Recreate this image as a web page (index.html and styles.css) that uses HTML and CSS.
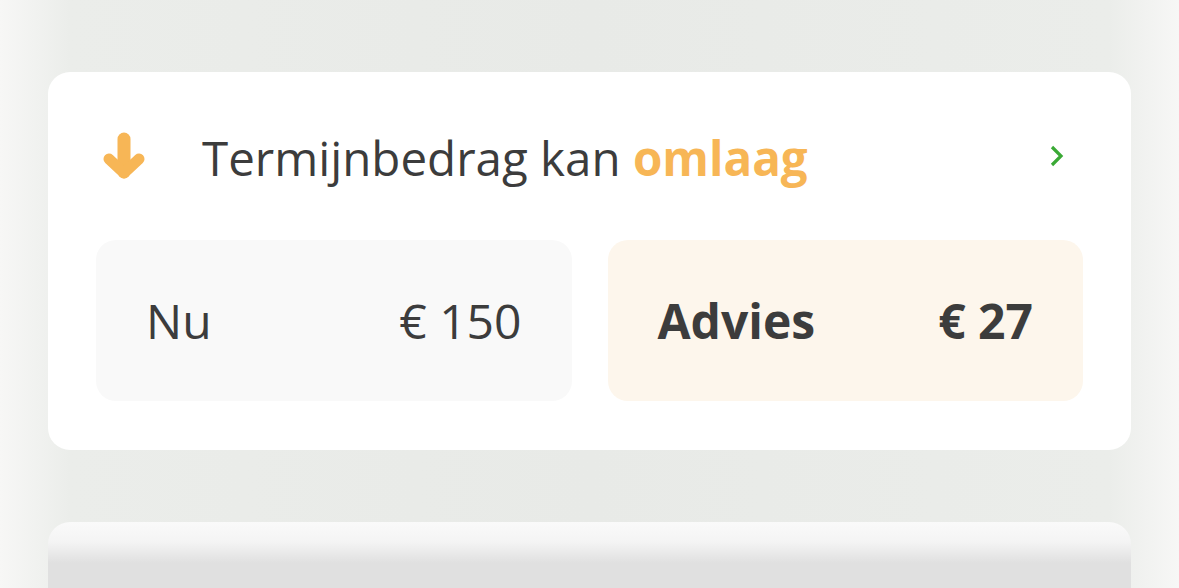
FILE: index.html
```html
<!DOCTYPE html>
<html lang="nl">
<head>
<meta charset="utf-8">
<link rel="stylesheet" href="styles.css">
</head>
<body>
<main class="page">
  <section class="card">
    <div class="card-head">
      <svg class="arrow" width="44" height="48" viewBox="0 0 44 48">
        <path d="M22 7 V40" fill="none" stroke="#f7b656" stroke-width="13" stroke-linecap="round"/>
        <path d="M7 27 L22 41 L37 27" fill="none" stroke="#f7b656" stroke-width="11" stroke-linecap="round" stroke-linejoin="round"/>
      </svg>
      <h2 class="title">Termijnbedrag kan <strong class="accent">omlaag</strong></h2>
      <svg class="chev" width="16" height="24" viewBox="0 0 16 24">
        <path d="M3 3 L12 12 L3 21" fill="none" stroke="#3aa935" stroke-width="3.2"/>
      </svg>
    </div>
    <div class="boxes">
      <div class="box box-now"><span>Nu</span><span>€ 150</span></div>
      <div class="box box-advice"><span>Advies</span><span>€ 27</span></div>
    </div>
  </section>
  <section class="card card-next"></section>
</main>
</body>
</html>
```
FILE: styles.css
```css
html, body {
  margin: 0;
  padding: 0;
}
body {
  font-family: "Open Sans", "Noto Sans", sans-serif;
  color: #3c3c3c;
  background: #e9ebe8;
  min-height: 588px;
}
.page {
  min-height: 588px;
  box-sizing: border-box;
  padding: 72px 48px 0;
  display: flex;
  flex-direction: column;
  gap: 72px;
  background: linear-gradient(90deg, #f7f7f6 0px, #ebedea 70px, #e8eae7 50%, #ebedea calc(100% - 70px), #f7f7f6 100%);
}
.card {
  background: #fff;
  border-radius: 22px;
  padding: 0 48px 49px;
}
.card-head {
  display: flex;
  align-items: center;
  height: 168px;
}
.arrow {
  margin-left: 6px;
  margin-right: 56px;
  flex: none;
}
.title {
  margin: 0;
  font-size: 47.5px;
  font-weight: 400;
  flex: 1;
  line-height: 1.2;
  padding-top: 2px;
}
.accent {
  color: #f7b656;
  font-weight: 700;
}
.chev {
  margin-right: 18px;
}
.boxes {
  display: grid;
  grid-template-columns: 1fr 1fr;
  gap: 36px;
}
.box {
  height: 161px;
  border-radius: 20px;
  display: flex;
  align-items: center;
  justify-content: space-between;
  padding: 0 50px;
  font-size: 48px;
}
.box-now {
  background: #f9f9f9;
}
.box-advice {
  background: #fdf6ec;
  font-weight: 700;
}
.card-next {
  flex: 1;
  padding: 0;
  border-radius: 22px 22px 0 0;
  background: linear-gradient(180deg, #fafafa 0px, #f4f4f4 20px, #e0e0e0 41px, #e0e0e0 100%);
}
```
